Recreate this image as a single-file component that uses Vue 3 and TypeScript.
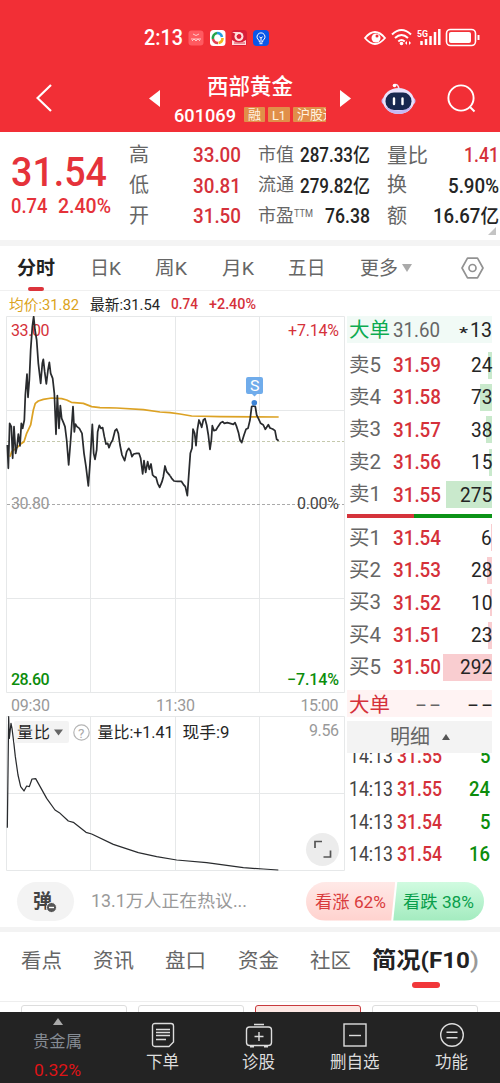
<script setup lang="ts">
import { h } from 'vue'

interface FitProps { t: string; w: number; s: number; b?: number }

// Single line of text set to an exact advance width, vertically centred in its box.
const Fit = (p: FitProps) =>
  h('svg', { width: p.w, height: p.s, class: 'fit', 'aria-label': p.t }, [
    h('text', {
      x: 0, y: p.s * 0.855, 'font-size': p.s, 'font-weight': p.b ?? 400,
      textLength: p.w, lengthAdjust: 'spacingAndGlyphs', fill: 'currentColor',
    }, p.t),
  ])
Fit.props = ['t', 'w', 's', 'b']

const stats = [
  { k: '高', kw: 20, v: '33.00', vw: 48, red: true },
  { k: '市值', kw: 36, v: '287.33亿', vw: 70 },
  { k: '量比', kw: 41, v: '1.41', vw: 35, red: true },
  { k: '低', kw: 20, v: '30.81', vw: 48, red: true },
  { k: '流通', kw: 36, v: '279.82亿', vw: 70 },
  { k: '换', kw: 20, v: '5.90%', vw: 51 },
  { k: '开', kw: 20, v: '31.50', vw: 48, red: true },
  { k: '市盈', kw: 36, v: '76.38', vw: 45, ttm: true },
  { k: '额', kw: 20, v: '16.67亿', vw: 66 },
]
const periods = [
  { t: '日K', w: 31 }, { t: '周K', w: 32 }, { t: '月K', w: 32 }, { t: '五日', w: 37.5 }, { t: '更多', w: 38 },
]
const asks = [
  { k: '卖5', p: '31.59', n: '24', bar: 4 },
  { k: '卖4', p: '31.58', n: '73', bar: 12 },
  { k: '卖3', p: '31.57', n: '38', bar: 6 },
  { k: '卖2', p: '31.56', n: '15', bar: 3 },
  { k: '卖1', p: '31.55', n: '275', bar: 46 },
]
const bids = [
  { k: '买1', p: '31.54', n: '6', bar: 1 },
  { k: '买2', p: '31.53', n: '28', bar: 5 },
  { k: '买3', p: '31.52', n: '10', bar: 2 },
  { k: '买4', p: '31.51', n: '23', bar: 4 },
  { k: '买5', p: '31.50', n: '292', bar: 49 },
]
const ticks = [
  { p: '31.55', n: '5' }, { p: '31.55', n: '24' }, { p: '31.54', n: '5' }, { p: '31.54', n: '16' },
]
const sections = ['看点', '资讯', '盘口', '资金', '社区']

const morning = '22,405 25,475 29,340 34,350 38,445 42,350 47,430 51,410 55,372 60,408 64,340 68,355 73,330 76,255 81,192 84,262 88,210 92,120 97,50 101,20 105,60 110,90 115,160 122,220 127,160 130,148 134,185 139,222 144,180 148,157 152,190 158,205 163,250 168,373 172,257 177,355 181,287 185,325 190,337 195,350 200,390 206,465 212,390 219,290 223,366 226,342 231,350 238,355 246,370 252,430 258,470 265,528 270,460 277,343 281,430 285,448 290,420 293,365 298,346 303,355 308,353 313,380 318,402 323,400 327,413 332,400 338,390 345,362 350,357 355,370 360,405 366,435 374,452 380,425 386,415 391,422 396,440 401,432 410,430 417,430 422,445 428,492 432,452 437,487 443,455 448,478 453,462 458,495 463,500 468,502 473,520 479,532 486,515 490,500 495,468 500,485 510,497'
const afternoon = '0,497 5,505 12,513 22,514 34,514 40,523 46,530 52,557 56,500 61,430 66,415 69,357 74,370 78,407 82,360 87,330 91,340 95,352 100,330 105,326 110,345 115,375 120,418 124,390 127,347 132,362 138,360 144,350 152,338 158,335 163,340 172,338 180,340 190,343 195,338 200,350 206,370 210,390 215,398 222,375 228,358 234,355 240,330 245,290 250,288 256,290 260,315 265,325 272,340 280,345 286,358 290,352 295,344 300,354 308,357 315,362 320,388 326,392'
const average = '30,440 35,425 52,412 62,402 72,395 80,370 92,345 100,300 106,280 115,273 130,268 155,264 185,266 200,270 214,277 250,280 275,290 300,293 350,294 430,299 480,306 510,308 540,312 575,318 660,320 836,321'
const ratio = '22,503 26,170 28,235 33,190 36,205 41,245 46,290 54,345 62,380 72,393 80,378 88,380 96,357 107,356 125,388 140,415 165,450 178,458 205,483 220,487 258,517 275,522 340,553 415,578 470,590 530,600 620,608 730,623 790,627 835,630'
</script>

<template>
  <main class="app">
    <header class="top">
      <div class="status">
        <Fit t="2:13" :w="39" :s="21.5" :b="500" class="clock" />
        <svg class="tray" width="82" height="16" viewBox="0 0 82 16">
          <rect x="0.5" y="0.5" width="15" height="15" rx="3" fill="#ff5a60" />
          <path d="M5 4q3 3 6 0M3 9h10M4 11l2-2 2 2 2-2 2 2" stroke="#ffc8c8" fill="none" />
          <rect x="22" y="0" width="15.500" height="16" rx="3.500" fill="#fff" />
          <path d="M25 9a5 5 0 0 1 4-6" stroke="#23a34a" stroke-width="2.600" fill="none" />
          <path d="M29 3q4 0 5 4" stroke="#249be0" stroke-width="2.600" fill="none" />
          <path d="M34.500 8a5 5 0 0 1-4 5" stroke="#f0b51d" stroke-width="2.600" fill="none" />
          <path d="M30 13q-4 0-5-4" stroke="#e34050" stroke-width="2.600" fill="none" />
          <rect x="43.500" y="0" width="15.500" height="16" rx="3.500" fill="#d81e38" />
          <circle cx="51" cy="6.500" r="4.500" fill="#ffe0df" />
          <circle cx="51" cy="6.500" r="2.400" fill="#d81e38" />
          <path d="M44 2h6v3zM44 10q7 5 14 0v5H44z" fill="#ffdcdc" />
          <path d="M46 13h11" stroke="#d84050" />
          <rect x="65" y="0" width="16" height="16" rx="4" fill="#0a57e8" />
          <path d="M71.300 10.500a4 4 0 1 1 3.400 0v1.500h-3.400zM71.500 13.700h3M71.300 6.800l1.700 1.200 1.700-1.200M73 8v3" stroke="#fff" fill="none" />
        </svg>
        <svg width="118" height="20" viewBox="363 28 118 20" fill="none">
          <path d="M365 38q10-12 20 0q-10 12-20 0z" stroke="#fff" stroke-width="1.800" />
          <circle cx="376" cy="38" r="4.500" fill="#fff" /><circle cx="377" cy="36" r="1.500" fill="#f22f36" />
          <g stroke="#fff" stroke-width="2">
            <path d="M392 34.500q9.500-9 19 0M395 38q6.500-6 13 0M398.300 41.500q3.200-3 6.400 0" />
          </g>
          <circle cx="401.500" cy="43.500" r="1.800" fill="#fff" />
          <path d="M405 43l2-2v4zM411 43l-2-2v4z" fill="#fff" />
          <text x="417" y="37" font-size="9" font-weight="700" textLength="11" lengthAdjust="spacingAndGlyphs" fill="#fff">5G</text>
          <path d="M421.500 41v4M426 39v6M430.500 36v9M435 32v13M439.300 29v16" stroke="#fff" stroke-width="2.500" />
          <rect x="446.500" y="29.500" width="29" height="16" rx="4" stroke="#fff" stroke-width="1.600" />
          <rect x="449" y="32" width="22" height="11" rx="2" fill="#fff" />
          <path d="M478.500 35v5" stroke="#fff" stroke-width="2" />
        </svg>
      </div>
      <div class="title-row">
        <svg class="back" width="18" height="30" viewBox="0 0 18 30"><path d="M15 1L1.500 14 15 27" stroke="#fff" stroke-width="2.200" fill="none" /></svg>
        <svg class="prev" width="11" height="17" viewBox="0 0 11 17"><path d="M11 0v17L0 8.500z" fill="#fff" /></svg>
        <div class="name">
          <Fit t="西部黄金" :w="86" :s="21.5" :b="500" />
          <div class="code">
            <Fit t="601069" :w="62" :s="18.5" :b="500" />
            <div class="tags">
              <span class="tag"><Fit t="融" :w="13" :s="13" /></span>
              <span class="tag"><Fit t="L1" :w="14" :s="13.5" /></span>
              <span class="tag"><Fit t="沪股通" :w="39" :s="13" /></span>
            </div>
          </div>
        </div>
        <svg class="next" width="11" height="17" viewBox="0 0 11 17"><path d="M0 0v17l11-8.500z" fill="#fff" /></svg>
        <svg class="robot" width="35" height="32" viewBox="0 0 35 32">
          <path d="M13 2q4-2 5 4" stroke="#f3dff3" stroke-width="1.600" fill="none" /><circle cx="13.500" cy="2.500" r="1.800" fill="#fff" />
          <ellipse cx="17.500" cy="18" rx="17" ry="7" fill="#cdbcf2" />
          <ellipse cx="17.500" cy="18" rx="15.500" ry="13" fill="#eae2fc" />
          <path d="M4 23q13 9 27 0q-4 8-13.500 8T4 23z" fill="#c6b8f4" />
          <rect x="4.500" y="9.500" width="26" height="17.500" rx="8.500" fill="#17284f" />
          <path d="M13 15.500v5.500M21.500 15.500v5.500" stroke="#fff" stroke-width="2.400" stroke-linecap="round" />
        </svg>
        <svg class="search" width="29" height="29" viewBox="0 0 29 29"><circle cx="14" cy="14" r="12.600" stroke="#fff" stroke-width="1.900" fill="none" /><path d="M22.500 22.500l5 5" stroke="#fff" stroke-width="2" /></svg>
      </div>
    </header>

    <section class="quote">
      <div class="last">
        <Fit t="31.54" :w="96" :s="41.5" :b="500" />
        <div class="change"><Fit t="0.74" :w="36.5" :s="19.5" :b="500" /><Fit t="2.40%" :w="53" :s="19.5" :b="500" /></div>
      </div>
      <div class="stats">
        <div v-for="s in stats" :key="s.k" class="stat">
          <span class="lab"><Fit :t="s.k" :w="s.kw" :s="s.kw > 20 ? s.kw / 2 : 20" /><Fit v-if="s.ttm" class="ttm" t="TTM" :w="19" :s="10.5" /></span>
          <Fit :t="s.v" :w="s.vw" :s="19.5" :b="500" :class="{ up: s.red }" />
        </div>
      </div>
      <i class="corner"></i>
    </section>

    <nav class="periods">
      <span class="active"><Fit t="分时" :w="38" :s="19" :b="700" /></span>
      <Fit v-for="p in periods" :key="p.t" :t="p.t" :w="p.w" :s="19" />
      <i class="caret"></i>
      <svg class="gear" width="23" height="22" viewBox="0 0 23 22" fill="none" stroke="#929292" stroke-width="1.700"><path d="M6.500 1.200h10L22 11l-5.500 9.800h-10L1 11z" stroke-linejoin="round" /><circle cx="11.500" cy="11" r="3.500" /></svg>
    </nav>

    <div class="legend">
      <Fit class="avg" t="均价:31.82" :w="70" :s="15" />
      <Fit class="dark" t="最新:31.54" :w="70" :s="15" />
      <Fit class="up" t="0.74" :w="27" :s="14.5" :b="500" />
      <Fit class="up" t="+2.40%" :w="47" :s="14.5" :b="500" />
    </div>

    <section class="market">
      <svg class="chart" width="345" height="556" viewBox="0 316 345 556" fill="none">
        <g stroke="#e6e8e9">
          <path d="M6.500 316.500h338M6.500 410.500h338M6.500 598.500h338M6.500 692.500h338M6.500 316.500v376M90.500 316.500v376M175.500 316.500v376M259.500 316.500v376M344.500 316.500v376" />
          <path d="M6.500 716.500h338M6.500 793.500h338M6.500 870.500h338M6.500 716.500v154M90.500 716.500v154M175.500 716.500v154M259.500 716.500v154M344.500 716.500v154" />
        </g>
        <path d="M7 441.500h337" stroke="#c5c9ad" stroke-dasharray="3 2" />
        <path d="M7 504.500h337" stroke="#aaa" stroke-dasharray="3 2" />
        <g class="num" font-size="16">
          <text x="11" y="336" textLength="38.500" fill="#d5313a">33.00</text>
          <text x="288" y="336" textLength="51" fill="#d5313a">+7.14%</text>
          <text x="11" y="509" textLength="38.500" fill="#999">30.80</text>
          <text x="297" y="509" textLength="42" fill="#444">0.00%</text>
          <text x="11" y="685" textLength="38.500" font-weight="500" fill="#0c8d0c">28.60</text>
          <text x="287" y="685" textLength="52" font-weight="500" fill="#0c8d0c">−7.14%</text>
          <g fill="#999">
            <text x="11" y="711" textLength="39">09:30</text>
            <text x="156" y="711" textLength="39">11:30</text>
            <text x="300.500" y="711" textLength="38">15:00</text>
            <text x="309" y="736" textLength="30">9.56</text>
          </g>
        </g>
        <g stroke-width="5.200" stroke-linejoin="round">
          <polyline :points="average" transform="translate(0 310) scale(.33333)" stroke="#dca224" />
          <polyline :points="morning" transform="translate(0 310) scale(.33333)" stroke="#292b2e" />
          <polyline :points="afternoon" transform="translate(170 310) scale(.33333)" stroke="#292b2e" />
          <polyline :points="ratio" transform="translate(0 660) scale(.33333)" stroke="#292b2e" stroke-width="3.700" />
        </g>
        <path d="M248 377h13q2 0 2 2v13q0 2-2 2h-4l-2.500 2.500L252 394h-4q-2 0-2-2v-13q0-2 2-2z" fill="#70aceb" />
        <text x="250" y="391" font-size="15.500" textLength="9.500" lengthAdjust="spacingAndGlyphs" fill="#fff">S</text>
        <circle cx="254.300" cy="402.800" r="2.800" fill="#3d83d5" />
        <rect x="14" y="721" width="55" height="22" rx="2" fill="#f1f1f1" fill-opacity="0.850" />
        <g class="num" font-size="16" fill="#252525">
          <text x="17" y="738" textLength="33">量比</text>
          <path d="M54 729.500h9l-4.500 6z" fill="#666" />
          <text x="97.500" y="738" textLength="76" lengthAdjust="spacingAndGlyphs">量比:+1.41</text>
          <text x="182.500" y="738" textLength="47" lengthAdjust="spacingAndGlyphs">现手:9</text>
        </g>
        <circle cx="81.500" cy="732.500" r="7.700" stroke="#b5b5b5" stroke-width="1.200" />
        <text x="78" y="737.500" font-size="13.500" fill="#aaa">?</text>
        <circle cx="322.500" cy="849.500" r="16.500" fill="#ececec" />
        <path d="M315 848v-6.500h7M330.500 850.500v6.500h-7" stroke="#555" stroke-width="1.700" />
      </svg>

      <div class="book">
        <div class="level big ask-big"><Fit t="大单" :w="41" :s="20.5" /><Fit class="px gray" t="31.60" :w="47" :s="19.5" /><Fit class="qty star dark" t="*" :w="9" :s="15" :b="500" /><Fit t="13" :w="22" :s="20" class="dark" /></div>
        <div class="levels">
          <div v-for="a in asks" :key="a.k" class="level">
            <i class="bar ask" :style="{ width: a.bar + 'px' }"></i>
            <Fit :t="a.k" :w="32" :s="20" /><Fit class="px up" :t="a.p" :w="48" :s="19.5" :b="500" /><Fit class="qty dark" :t="a.n" :w="a.n.length * 10.7" :s="19.5" />
          </div>
        </div>
        <div class="split"></div>
        <div class="levels">
          <div v-for="a in bids" :key="a.k" class="level">
            <i class="bar bid" :style="{ width: a.bar + 'px' }"></i>
            <Fit :t="a.k" :w="32" :s="20" /><Fit class="px up" :t="a.p" :w="48" :s="19.5" :b="500" /><Fit class="qty dark" :t="a.n" :w="a.n.length * 10.7" :s="19.5" />
          </div>
        </div>
        <div class="level big bid-big">
          <Fit class="up" t="大单" :w="41" :s="20.5" />
          <span class="dash gray"><Fit t="-" :w="10" :s="20" /><Fit t="-" :w="10" :s="20" /></span>
          <span class="dash qty dark"><Fit t="-" :w="10" :s="20" /><Fit t="-" :w="10" :s="20" /></span>
        </div>
        <div class="detail"><Fit t="明细" :w="40" :s="20" /><i></i></div>
        <div class="ticks">
          <div v-for="(k, i) in ticks" :key="i" class="tick">
            <Fit t="14:13" :w="44" :s="19.5" /><Fit class="up" :t="k.p" :w="45" :s="19.5" :b="500" /><Fit class="green" :t="k.n" :w="k.n.length * 10.5" :s="19.5" :b="500" />
          </div>
        </div>
      </div>
    </section>

    <section class="talk">
      <div class="dan">
        <Fit t="弹" :w="19" :s="19" :b="700" />
        <svg class="minus" width="11" height="11" viewBox="0 0 11 11"><circle cx="5.500" cy="5.500" r="5" fill="#555" stroke="#f3f3f3" /><path d="M3 5.500h5" stroke="#fff" stroke-width="1.400" /></svg>
      </div>
      <Fit class="hot" t="13.1万人正在热议..." :w="156" :s="17.5" />
      <div class="vote">
        <div class="bull"><Fit t="看涨 62%" :w="71" :s="17" /></div>
        <div class="bear"><Fit t="看跌 38%" :w="71" :s="17" /></div>
      </div>
    </section>

    <nav class="sections">
      <Fit v-for="s in sections" :key="s" :t="s" :w="41" :s="20.5" />
      <span class="f10"><Fit t="简况(F10" :w="98" :s="22.5" :b="700" /><Fit class="fade" t=")" :w="9" :s="22.5" :b="500" /></span>
    </nav>
    <div class="cards"><i></i><i></i><i class="on"></i><i></i></div>

    <footer class="dock">
      <div class="index">
        <i class="tri"></i>
        <Fit t="贵金属" :w="49" :s="16.3" />
        <Fit class="pct" t="0.32%" :w="47" :s="17" />
      </div>
      <div class="act">
        <svg width="24" height="26" viewBox="0 0 24 26"><path d="M4 1.500h16q2.500 0 2.500 2.500v16l-4.500 4.500H4Q1.500 24.500 1.500 22V4Q1.500 1.500 4 1.500zM5 7.500h14M5 10.500h14M5 13.500h14M5 17.500h10" /></svg>
        <Fit t="下单" :w="33" :s="16.5" />
      </div>
      <div class="act">
        <svg width="28" height="26" viewBox="0 0 28 26"><rect x="1.500" y="5" width="25" height="18.500" rx="3" /><path d="M9 2.500h10M14 10v9M9.500 14.500h9" /><path d="M5 24.500h4M19 24.500h4" stroke-width="2" /></svg>
        <Fit t="诊股" :w="33" :s="16.5" />
      </div>
      <div class="act">
        <svg width="24" height="26" viewBox="0 0 24 26"><rect x="1" y="2" width="22" height="22" /><path d="M6 13.500h12" /></svg>
        <Fit t="删自选" :w="49.5" :s="16.5" />
      </div>
      <div class="act">
        <svg width="26" height="26" viewBox="0 0 26 26"><circle cx="13" cy="13" r="11.300" /><path d="M7.500 10.300h11M7.500 15.800h11" /></svg>
        <Fit t="功能" :w="33" :s="16.5" />
      </div>
    </footer>
  </main>
</template>

<style>
body { margin: 0; background: #fff; }
.fit { display: block; flex: none; overflow: visible; }
</style>

<style scoped>
.app { width: 500px; height: 1083px; overflow: hidden; background: #fff; color: #666; font-family: Roboto, "Noto Sans CJK SC", sans-serif; display: flex; flex-direction: column; }
.app > * { flex: none; box-sizing: border-box; }
svg { display: block; flex: none; }
.up { color: #d5313a; }
.dark { color: #252525; }
.gray { color: #666; }
.green { color: #0c8d0c; }

.top { height: 132px; background: #f22f36; color: #fff; }
.status { height: 65px; padding: 10px 19px 0 144px; display: flex; align-items: center; box-sizing: border-box; }
.tray { margin: 0 auto 0 5px; }
.title-row { height: 67px; padding-left: 36px; display: flex; align-items: center; }
.prev { margin-left: 95px; }
.name { width: 152px; margin: 0 14px; display: flex; flex-direction: column; align-items: center; gap: 8px; padding-top: 3px; }
.code { width: 152px; display: flex; align-items: center; }
.tags { width: 82px; margin-left: 8px; overflow: hidden; display: flex; gap: 3px; }
.tag { height: 15px; padding: 0 4px; background: #e18f49; border-radius: 1px; display: flex; align-items: center; color: #fff3e0; }
.robot { margin-left: 30px; }
.search { margin-left: 31px; }

.quote { height: 114px; border-bottom: 6px solid #f4f4f4; padding: 8px 0 0 11px; display: flex; position: relative; }
.last { width: 118px; color: #e5323a; padding-top: 11px; }
.change { display: flex; gap: 10px; margin-top: 3px; }
.stats { display: grid; grid-template-columns: 112px 112px 112px; column-gap: 17px; grid-auto-rows: 30.300px; }
.stat { display: flex; align-items: center; justify-content: space-between; color: #252525; }
.stat .up { color: #d5313a; }
.lab { display: flex; color: #666; }
.ttm { margin-top: 1px; }
.corner { position: absolute; right: 4px; bottom: 5px; border: 4px solid transparent; border-right-color: #c4c4c4; border-bottom-color: #c4c4c4; }

.periods { height: 45px; padding-left: 17px; border-bottom: 1px solid #f0f0f0; display: flex; align-items: center; gap: 34.500px; }
.active { color: #222; height: 45px; display: flex; align-items: center; position: relative; }
.active::after { content: ""; position: absolute; left: 11px; bottom: 0; width: 16px; height: 4px; border-radius: 2px; background: #dc343c; }
.caret { border: 5.500px solid transparent; border-top: 8px solid #aaa; border-bottom: 0; margin-left: -31px; }
.gear { margin-left: 14.500px; }

.legend { height: 25px; padding: 2px 0 0 9px; display: flex; align-items: center; gap: 11px; }
.avg { color: #dba321; }

.market { height: 556px; display: flex; }
.num text { font-family: Roboto, "Noto Sans CJK SC", sans-serif; }
.book { width: 145px; margin-left: 2px; display: flex; flex-direction: column; }
.level { height: 32.400px; display: flex; align-items: center; position: relative; padding-left: 2px; }
.px { margin-left: 12px; }
.level > svg { position: relative; }
.level .qty { margin-left: auto; }
.level .star { margin-right: 2px; margin-top: 6px; }
.bar { position: absolute; right: 0; top: 3px; height: 27px; }
.ask { background: #c9e9cc; }
.bid { background: #f9cdd0; }
.big { height: 27px; }
.big .px { margin-left: 3px; }
.ask-big { color: #0cab50; background: #f1faf6; margin-bottom: 5.500px; }
.split { height: 4px; margin: 4px 0 3px; background: linear-gradient(90deg, #d5333b 46%, #0c9317 46%); }
.bid-big { background: #fff3f3; margin: 7px 0 4px; }
.dash { margin-left: 26px; display: flex; gap: 4px; }
.detail { height: 32px; background: #f3f3f3; display: flex; align-items: center; justify-content: center; gap: 12px; box-sizing: border-box; }
.detail i { border: 4px solid transparent; border-bottom: 6px solid #555; border-top: 0; }
.ticks { height: 118px; padding-bottom: 1px; box-sizing: border-box; overflow: hidden; display: flex; flex-direction: column; justify-content: flex-end; }
.tick { height: 32.700px; flex: none; display: flex; align-items: center; padding: 0 2px; gap: 4px; color: #444; }
.tick .green { margin-left: auto; }

.talk { height: 60px; padding: 9px 16px 6px 17px; border-bottom: 5px solid #f3f3f3; display: flex; align-items: center; }
.dan { width: 57px; height: 39px; border-radius: 20px; background: #f3f3f3; color: #444; display: flex; align-items: center; justify-content: center; position: relative; padding-right: 6px; box-sizing: border-box; }
.minus { position: absolute; left: 29px; top: 20px; }
.hot { margin-left: 17px; color: #999; }
.vote { margin-left: auto; width: 178px; height: 39px; border-radius: 20px; overflow: hidden; display: flex; }
.bull, .bear { display: flex; align-items: center; box-sizing: border-box; }
.bull { width: 89.500px; padding-left: 9px; color: #d93b3d; background: linear-gradient(#ffe9e7, #ffd2ce); clip-path: polygon(0 0, 100% 0, 95.500% 100%, 0 100%); }
.bear { width: 91px; margin-left: -2px; padding-left: 10px; color: #0a9f4c; background: linear-gradient(#d0fbe0, #a3ebbf); clip-path: polygon(4.500% 0, 100% 0, 100% 100%, 0 100%); }

.sections { height: 70px; padding: 0 0 12px 21px; border-bottom: 1px solid #eee; display: flex; align-items: center; gap: 31.200px; }
.f10 { display: flex; align-items: center; margin-left: -10px; color: #222; height: 57px; position: relative; }
.f10::after { content: ""; position: absolute; left: 40px; bottom: 1px; width: 28px; height: 6px; border-radius: 3px; background: #f1373a; }
.fade { color: #999; }
.cards { height: 10px; padding: 3px 21px 0; overflow: hidden; display: flex; gap: 11px; }
.cards i { width: 106px; flex: none; box-sizing: border-box; height: 20px; border: 1px solid #ddd; border-radius: 3px; }
.cards .on { border-color: #c83a3e; background: #fde8e4; }

.dock { height: 71px; background: #232323; color: #ddd; display: flex; padding-left: 9px; }
.index { width: 97px; color: #858b93; display: flex; flex-direction: column; align-items: center; padding-top: 6px; }
.tri { border: 5.500px solid transparent; border-top: 0; border-bottom: 7px solid #aaa; }
.index .fit { margin-top: 8px; }
.index .pct { margin-top: 12px; color: #df1417; }
.act { width: 96.300px; margin-left: 8.500px; margin-right: -8.500px; padding-top: 10px; display: flex; flex-direction: column; align-items: center; gap: 6px; }
.act svg:first-child { fill: none; stroke: #ddd; stroke-width: 1.400; }
</style>
